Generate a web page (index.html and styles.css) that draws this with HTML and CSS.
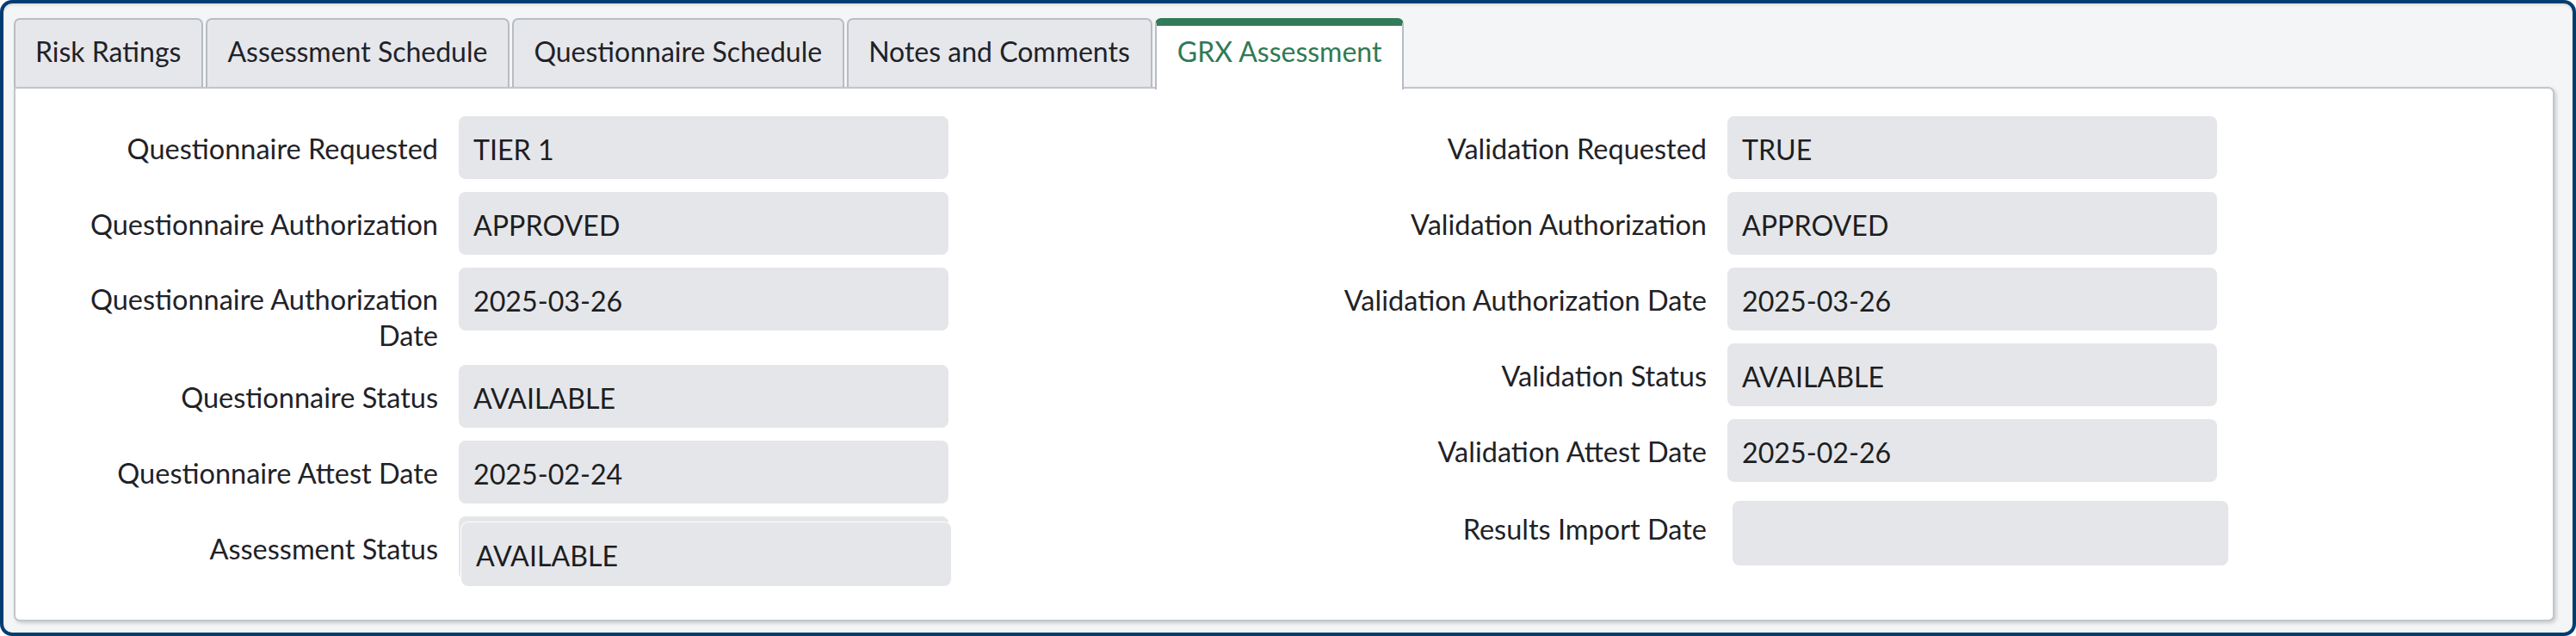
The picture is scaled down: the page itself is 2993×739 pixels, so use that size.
FILE: index.html
```html
<!DOCTYPE html>
<html lang="en">
<head>
<meta charset="utf-8">
<title>GRX Assessment</title>
<link rel="stylesheet" href="styles.css">
</head>
<body>
<div class="frame">
  <div class="tabs">
    <div class="tab">Risk Ratings</div>
    <div class="tab">Assessment Schedule</div>
    <div class="tab">Questionnaire Schedule</div>
    <div class="tab">Notes and Comments</div>
    <div class="tab tab-active">GRX Assessment</div>
  </div>
  <div class="panel">
    <div class="col">
      <div class="row"><div class="label">Questionnaire Requested</div><div class="box">TIER 1</div></div>
      <div class="row"><div class="label">Questionnaire Authorization</div><div class="box">APPROVED</div></div>
      <div class="row"><div class="label label-two">Questionnaire Authorization Date</div><div class="box">2025-03-26</div></div>
      <div class="row"><div class="label">Questionnaire Status</div><div class="box">AVAILABLE</div></div>
      <div class="row"><div class="label">Questionnaire Attest Date</div><div class="box">2025-02-24</div></div>
      <div class="row"><div class="label">Assessment Status</div><div class="box box-layered">AVAILABLE</div></div>
    </div>
    <div class="col">
      <div class="row"><div class="label">Validation Requested</div><div class="box">TRUE</div></div>
      <div class="row"><div class="label">Validation Authorization</div><div class="box">APPROVED</div></div>
      <div class="row"><div class="label">Validation Authorization Date</div><div class="box">2025-03-26</div></div>
      <div class="row"><div class="label">Validation Status</div><div class="box">AVAILABLE</div></div>
      <div class="row"><div class="label">Validation Attest Date</div><div class="box">2025-02-26</div></div>
      <div class="row"><div class="label label-low">Results Import Date</div><div class="box box-wide"></div></div>
    </div>
  </div>
</div>
</body>
</html>
```

FILE: styles.css
```css
html, body {
  margin: 0;
  padding: 0;
  background: #ffffff;
}

body {
  width: 2993px;
  height: 739px;
  font-family: Lato, "Open Sans", sans-serif;
  color: #1f2227;
}

.frame {
  box-sizing: border-box;
  width: 2993px;
  height: 739px;
  border: 4px solid #023d72;
  border-radius: 14px;
  background: #f4f5f7;
  box-shadow: inset 0 2px 3px rgba(0, 0, 0, 0.10);
  padding: 17px 21px 13px 12px;
  display: flex;
  flex-direction: column;
}

.tabs {
  display: flex;
  align-items: flex-end;
  gap: 3px;
  height: 80px;
  flex: none;
}

.tab {
  box-sizing: border-box;
  height: 80px;
  padding: 0 24px 6px 23px;
  display: flex;
  align-items: center;
  font-size: 32px;
  color: #1f2227;
  background: #e6e7eb;
  border: 2px solid #b8bcc3;
  border-bottom: none;
  border-radius: 7px 7px 0 0;
  white-space: nowrap;
}

.tab-active {
  position: relative;
  z-index: 1;
  height: 83px;
  margin-bottom: -3px;
  padding-bottom: 15px;
  background: #ffffff;
  color: #2f7a55;
  border-top: 9px solid #337b58;
  padding-left: 24px;
  padding-right: 24px;
}

.panel {
  flex: 1;
  box-sizing: border-box;
  background: #ffffff;
  border: 2px solid #c2c6cc;
  border-radius: 0 7px 7px 7px;
  box-shadow: 2px 2px 4px rgba(0, 0, 0, 0.18);
  display: grid;
  grid-template-columns: 1fr 1fr;
  padding-top: 32px;
}

.col {
  display: flex;
  flex-direction: column;
  gap: 15px;
}

.row {
  display: flex;
  align-items: flex-start;
}

.label {
  box-sizing: border-box;
  width: 491px;
  padding: 17px 0 0 40px;
  text-align: right;
  font-size: 32.5px;
  line-height: 42px;
  color: #1f2227;
}

.label-two {
  padding-top: 16px;
  margin-bottom: -2px;
}

.label-low {
  padding-top: 19px;
}

.box {
  box-sizing: border-box;
  width: 569px;
  height: 73px;
  margin-left: 24px;
  padding: 3px 0 0 17px;
  display: flex;
  align-items: center;
  background: #e5e6ea;
  border-radius: 8px;
  font-size: 32.2px;
  color: #1c1e22;
}

.box-layered {
  margin-top: 7px;
  margin-left: 27px;
  height: 74px;
  box-shadow: 0 0 0 1px #ffffff, -3px -7px 0 0 #e5e6ea;
}

.box-wide {
  margin-top: 7px;
  margin-left: 30px;
  width: 576px;
  height: 75px;
}
```
